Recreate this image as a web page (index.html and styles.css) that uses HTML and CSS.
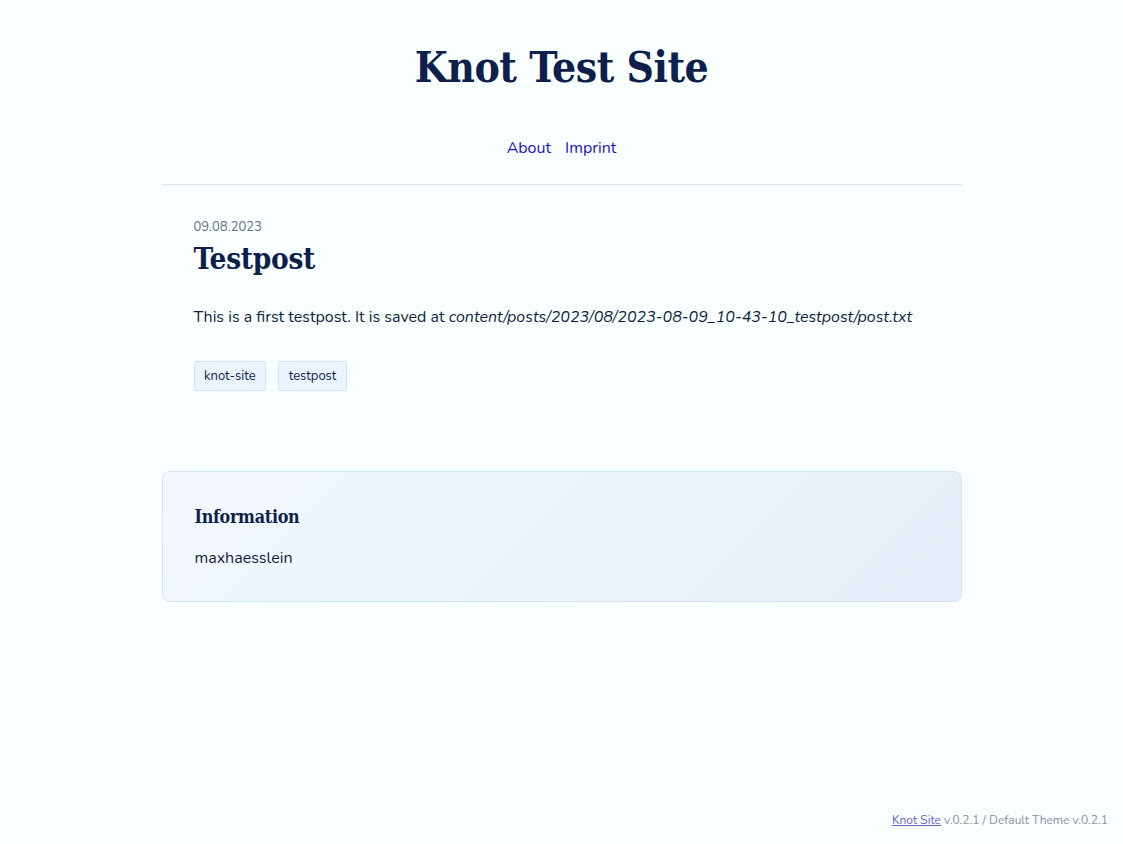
FILE: index.html
```html
<!DOCTYPE html>
<html lang="en">
<head>
<meta charset="utf-8">
<title>Knot Test Site</title>
<link rel="stylesheet" href="styles.css">
</head>
<body>
<div class="page">
  <header class="site-header">
    <h1 class="site-title">Knot Test Site</h1>
    <nav class="site-nav">
      <a href="#">About</a>
      <a href="#">Imprint</a>
    </nav>
  </header>
  <main class="content">
    <article class="post">
      <div class="post-date">09.08.2023</div>
      <h2 class="post-title">Testpost</h2>
      <p class="post-text">This is a first testpost. It is saved at <em>content/posts/2023/08/2023-08-09_10-43-10_testpost/post.txt</em></p>
      <ul class="tags">
        <li class="tag">knot-site</li>
        <li class="tag">testpost</li>
      </ul>
    </article>
    <aside class="info">
      <h3 class="info-title">Information</h3>
      <p class="info-text">maxhaesslein</p>
    </aside>
  </main>
</div>
<footer class="site-footer">
  <a href="#">Knot Site</a> v.0.2.1 / Default Theme v.0.2.1
</footer>
</body>
</html>
```
FILE: styles.css
```css
html, body {
  margin: 0;
  padding: 0;
}
body {
  background: #f8fffe;
  color: #111d3f;
  font-family: "Nunito", "Noto Sans", sans-serif;
  font-size: 16px;
  min-height: 844px;
  display: flex;
  flex-direction: column;
}
.page {
  width: 800px;
  margin: 0 auto;
  flex: 1;
}
.site-header {
  text-align: center;
  border-bottom: 1px solid #d8e6f3;
  padding-top: 36px;
  padding-bottom: 25px;
}
.site-title {
  margin: 0;
  font-family: "DejaVu Serif", serif;
  font-stretch: condensed;
  font-weight: bold;
  font-size: 42.3px;
  line-height: 62px;
  color: #0f1f4b;
  letter-spacing: -0.5px;
}
.site-nav {
  margin-top: 39px;
  display: flex;
  justify-content: center;
  gap: 14px;
  line-height: 22px;
}
.site-nav a {
  color: #1c12c4;
  text-decoration: none;
  font-size: 16px;
}
.post {
  padding: 33px 32px 80px 32px;
}
.post-date {
  font-size: 13px;
  color: #6a7289;
  line-height: 18px;
}
.post-title {
  margin: 4px 0 0;
  font-family: "DejaVu Serif", serif;
  font-stretch: condensed;
  font-weight: bold;
  font-size: 29.5px;
  line-height: 38px;
  color: #0f1f4b;
  letter-spacing: -0.3px;
}
.post-text {
  margin: 27px 0 0;
  line-height: 24px;
  font-size: 16px;
}
.tags {
  list-style: none;
  margin: 32px 0 0;
  padding: 0;
  display: flex;
  gap: 12px;
}
.tag {
  font-size: 13px;
  line-height: 28px;
  padding: 0 9.5px;
  background: #ebf3fc;
  border: 1px solid #d3e3f5;
  border-radius: 2px;
  color: #0f1f4b;
}
.info {
  border: 1px solid #d3e3f6;
  border-radius: 8px;
  background: linear-gradient(135deg, #f3f8fe 0%, #e5eff9 100%);
  padding: 30px 32px 32px;
}
.info-title {
  margin: 0;
  font-family: "DejaVu Serif", serif;
  font-stretch: condensed;
  font-weight: bold;
  font-size: 17.8px;
  line-height: 30px;
  color: #0f1f4b;
  letter-spacing: -0.3px;
}
.info-text {
  margin: 15px 0 0;
  line-height: 22px;
}
.site-footer {
  text-align: right;
  font-size: 12px;
  color: #8a90a4;
  padding: 0 15px 16px;
  line-height: 16px;
}
.site-footer a {
  color: #6b5fd0;
}
```
